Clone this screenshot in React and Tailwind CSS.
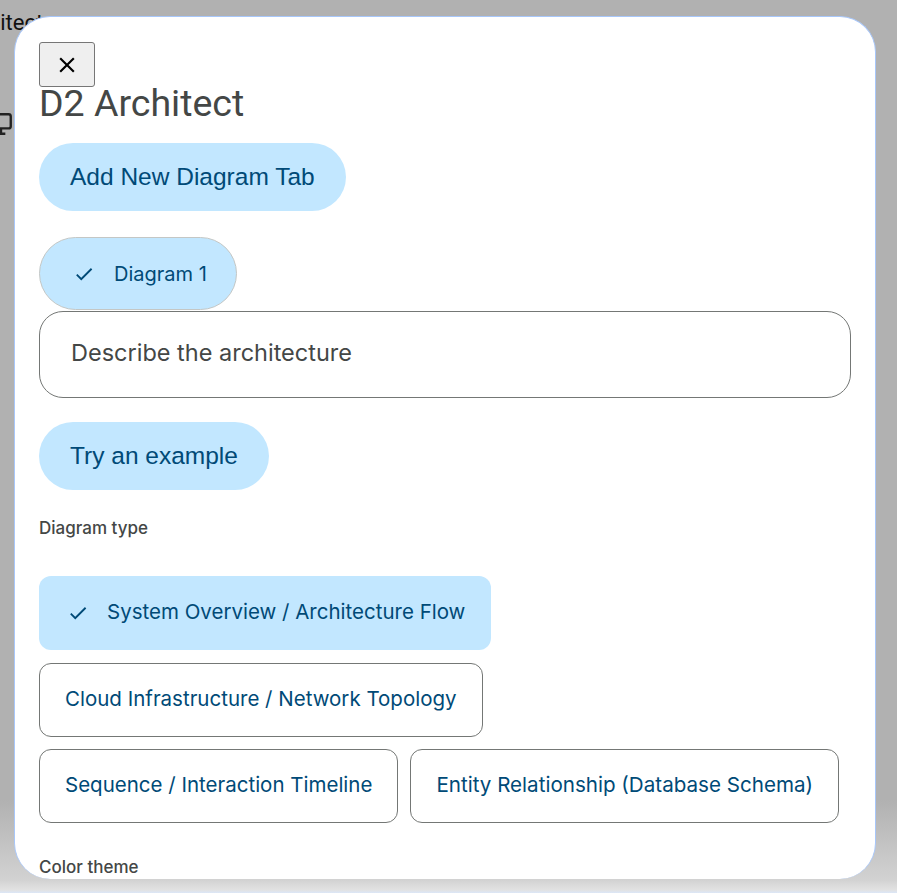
import React from "react";

function CheckIcon({ className }) {
  return (
    <svg viewBox="0 0 24 24" className={className} fill="currentColor">
      <path d="M9 16.17L4.83 12l-1.42 1.41L9 19 21 7l-1.41-1.41z" />
    </svg>
  );
}

function CloseIcon({ className }) {
  return (
    <svg viewBox="0 0 24 24" className={className} fill="currentColor">
      <path d="M19 6.41L17.59 5 12 10.59 6.41 5 5 6.41 10.59 12 5 17.59 6.41 19 12 13.41 17.59 19 19 17.59 13.41 12z" />
    </svg>
  );
}

function MonitorIcon({ className }) {
  return (
    <svg viewBox="0 0 24 24" className={className} fill="none" stroke="currentColor" strokeWidth="2.2">
      <rect x="3" y="3" width="18" height="13" rx="2" />
      <path d="M8 21h8M12 16v5" />
    </svg>
  );
}

const roboto = { fontFamily: "Roboto, 'Noto Sans', sans-serif" };
const inter = { fontFamily: "Inter, Roboto, sans-serif" };
const arial = { fontFamily: "'Liberation Sans', Arial, sans-serif" };

export default function App() {
  return (
    <div className="relative h-[893px] w-full overflow-hidden bg-[linear-gradient(to_bottom,#b1b1b1_0px,#b1b1b1_800px,#d2d2d2_880px,#e2e2e2_890px,#dbe6f7_893px)]">
      {/* underlying page (dimmed) */}
      <div className="pt-[6px] text-[22px] text-[#111] -ml-[45px]" style={roboto}>
        Architect
      </div>
      <div className="mt-[72px] -ml-[12px] text-[#222]">
        <MonitorIcon className="h-[26px] w-[26px]" />
      </div>

      {/* modal */}
      <div className="absolute left-[14px] top-[16px] w-[862px] h-[863px] overflow-hidden rounded-[36px] bg-white border border-b-0 border-[#a8c7fa] px-[24px] pt-[25px]">
        <button className="flex h-[45px] w-[56px] items-center justify-center rounded-[3px] border border-[#767676] bg-[#efefef] text-black">
          <CloseIcon className="h-[26px] w-[26px]" />
        </button>
        <h1 className="mt-[-6px] text-[37.5px] leading-[44px] text-[#444746]" style={roboto}>
          D2 Architect
        </h1>

        <button
          className="mt-[18px] flex h-[68px] items-center rounded-full bg-[#c2e7ff] px-[31px] text-[24.5px] text-[#004a77]"
          style={arial}
        >
          Add New Diagram Tab
        </button>

        <div className="mt-[26px] flex h-[73px] w-[198px] items-center rounded-full border border-[#c4c7c5] bg-[#c2e7ff] pl-[33px] text-[20px] text-[#004a77]" style={inter}>
          <CheckIcon className="h-[22px] w-[22px]" />
          <span className="ml-[19px]">Diagram 1</span>
        </div>

        <div className="mt-[1px] flex h-[87px] w-[812px] items-center rounded-[24px] border border-[#747775] pl-[31px] pb-[3px] text-[23.5px] text-[#444746]" style={inter}>
          Describe the architecture
        </div>

        <button
          className="mt-[24px] flex h-[68px] items-center rounded-full bg-[#c2e7ff] px-[31px] text-[24.5px] text-[#004a77]"
          style={arial}
        >
          Try an example
        </button>

        <div className="mt-[26px] text-[17px] font-medium text-[#444746]" style={inter}>
          Diagram type
        </div>

        <div className="mt-[34px] flex flex-col gap-[13px]">
          <div className="flex">
            <div className="flex h-[74px] items-center rounded-[12px] bg-[#c2e7ff] pl-[28px] pr-[26px] text-[20.5px] text-[#004a77]" style={inter}>
              <CheckIcon className="h-[22px] w-[22px]" />
              <span className="ml-[18px]">System Overview / Architecture Flow</span>
            </div>
          </div>
          <div className="flex">
            <div className="flex h-[74px] items-center rounded-[12px] border border-[#747775] px-[25px] text-[20.5px] text-[#004a77]" style={inter}>
              Cloud Infrastructure / Network Topology
            </div>
          </div>
          <div className="-mt-[1px] flex gap-[12px]">
            <div className="flex h-[74px] items-center rounded-[12px] border border-[#747775] px-[25px] text-[20.5px] text-[#004a77]" style={inter}>
              Sequence / Interaction Timeline
            </div>
            <div className="flex h-[74px] items-center rounded-[12px] border border-[#747775] px-[25px] text-[20.6px] text-[#004a77]" style={inter}>
              Entity Relationship (Database Schema)
            </div>
          </div>
        </div>

        <div className="mt-[32px] text-[17px] font-medium text-[#444746]" style={inter}>
          Color theme
        </div>
      </div>
    </div>
  );
}
